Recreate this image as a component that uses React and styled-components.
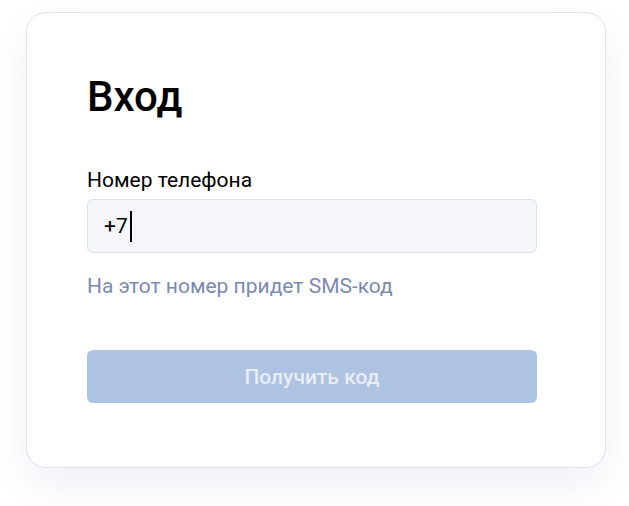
import React from 'react';
import styled, { createGlobalStyle } from 'styled-components';

const GlobalStyle = createGlobalStyle`
  body {
    margin: 0;
    background: #ffffff;
    font-family: Roboto, "Noto Sans", sans-serif;
  }
`;

const Page = styled.div`
  box-sizing: border-box;
  min-height: 506px;
  padding: 12px 0 0 26px;
`;

const Card = styled.div`
  box-sizing: border-box;
  width: 580px;
  height: 456px;
  padding: 59px 60px 63px;
  border: 1px solid #dfe2ec;
  border-radius: 20px;
  background: #fff;
  box-shadow: 0 18px 36px rgba(70, 90, 150, 0.08);
`;

const Form = styled.div`
  width: 450px;
  display: flex;
  flex-direction: column;
`;

const Title = styled.h1`
  margin: 0;
  font-size: 42px;
  line-height: 50px;
  font-weight: 500;
  color: #000;
`;

const Label = styled.label`
  margin-top: 46px;
  font-size: 21px;
  line-height: 24px;
  color: #000;
`;

const Field = styled.div`
  box-sizing: border-box;
  margin-top: 7px;
  height: 54px;
  padding: 0 16px;
  display: flex;
  align-items: center;
  border: 1px solid #dde0e8;
  border-radius: 6px;
  background: #f5f6fa;
  font-size: 21px;
  color: #000;
`;

const Caret = styled.span`
  display: inline-block;
  width: 2px;
  height: 31px;
  margin-left: 2px;
  background: #000;
`;

const Hint = styled.p`
  margin: 21px 0 0;
  font-size: 21px;
  line-height: 24px;
  color: #7b8ab0;
`;

const Button = styled.button`
  margin-top: 52px;
  height: 53px;
  border: none;
  border-radius: 6px;
  background: #aec2e2;
  color: #e8edf6;
  font-family: inherit;
  font-size: 21px;
  font-weight: 500;
`;

const App = () => {
  return (
    <Page>
      <GlobalStyle />
      <Card>
        <Form>
          <Title>Вход</Title>
          <Label>Номер телефона</Label>
          <Field>
            +7<Caret />
          </Field>
          <Hint>На этот номер придет SMS-код</Hint>
          <Button disabled>Получить код</Button>
        </Form>
      </Card>
    </Page>
  );
};

export default App;
